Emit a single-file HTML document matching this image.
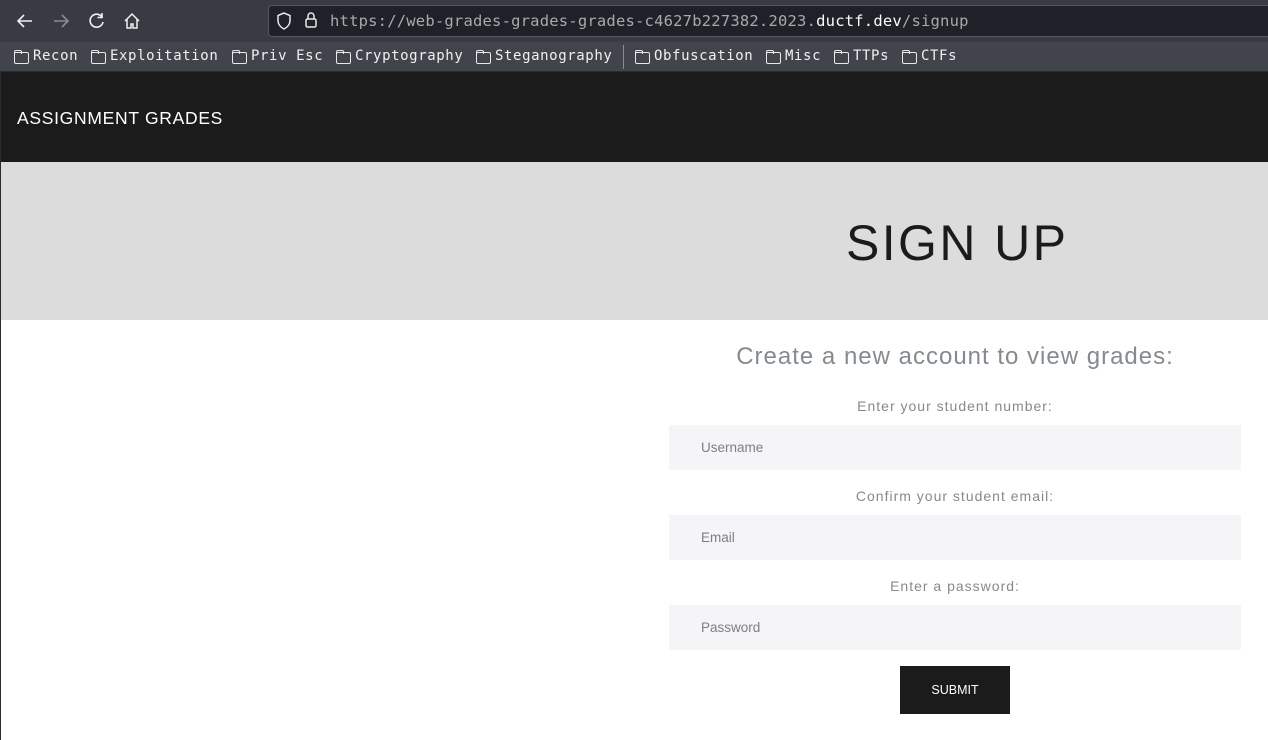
<!DOCTYPE html>
<html><head><style>
*{margin:0;padding:0;box-sizing:border-box}
body{width:1268px;height:740px;overflow:hidden;background:#fff;font-family:"Liberation Sans",sans-serif;position:relative}
.top{position:absolute;left:0;top:0;width:1268px;height:42px;background:#393b42}
.url{position:absolute;left:268px;top:5px;width:1010px;height:32px;background:#1f2128;border:1px solid #55575e;border-radius:4px;font-family:"DejaVu Sans Mono","Liberation Mono",monospace;font-size:15.5px;color:#a8a9ad;line-height:30px;padding-left:61px;letter-spacing:0.2px}
.url b{font-weight:normal;color:#fbfbfe}
.bm{position:absolute;left:0;top:42px;width:1268px;height:30px;background:#42444c;border-bottom:1px solid #2a2b30;font-family:"DejaVu Sans Mono","Liberation Mono",monospace;font-size:14px;color:#f0f0f4;letter-spacing:0.6px}
.bm span{position:absolute;top:6px;padding-left:19px}
.bm span:before{content:"";position:absolute;left:0;top:4px;width:13px;height:10px;border:1.3px solid #e8e8ec;border-radius:2px}
.bm span:after{content:"";position:absolute;left:0;top:2px;width:6px;height:3px;border:1.3px solid #e8e8ec;border-bottom:none;border-radius:2px 2px 0 0}
.nav{position:absolute;left:0;top:72px;width:1268px;height:90px;background:#1b1b1b}
.nav div{position:absolute;left:17px;top:36px;color:#fff;font-size:17.5px;letter-spacing:0.7px}
.hero{position:absolute;left:1px;top:162px;width:1267px;height:158px;background:#dcdcdc}
.hero h1{position:absolute;left:845px;top:52px;font-weight:normal;font-size:50px;letter-spacing:2.4px;color:#1b1b1b}
.edge{position:absolute;left:0;top:72px;width:1px;height:668px;background:#2a2a3a}
.c{position:absolute;left:669px;width:572px;text-align:center}
.lbl{font-size:14px;color:#858a90;letter-spacing:1px}
.in{position:absolute;left:669px;width:572px;height:45px;background:#f5f5f7;font-size:13.5px;color:#7b7f85;padding-left:32px;line-height:45px}
svg{position:absolute}
</style></head><body>
<div class="top">
<svg style="left:16px;top:13px" width="18" height="16" viewBox="0 0 18 16"><path d="M16 8H2M8 2L2 8l6 6" fill="none" stroke="#f0f0f4" stroke-width="1.6"/></svg>
<svg style="left:52px;top:13px" width="18" height="16" viewBox="0 0 18 16"><path d="M2 8h14M10 2l6 6-6 6" fill="none" stroke="#8a8b90" stroke-width="1.6"/></svg>
<svg style="left:88px;top:12px" width="18" height="18" viewBox="0 0 18 18"><path d="M14 5A6.5 6.5 0 1 0 15 10M14 1v4.5H9.5" fill="none" stroke="#f0f0f4" stroke-width="1.6"/></svg>
<svg style="left:123px;top:12px" width="18" height="18" viewBox="0 0 18 18"><path d="M2 9L9 2l7 7M4 7v9h4v-4h2v4h4V7" fill="none" stroke="#f0f0f4" stroke-width="1.5"/></svg>
</div>
<div class="url">https://web-grades-grades-grades-c4627b227382.2023.<b>ductf.dev</b>/signup</div>
<svg style="left:276px;top:12px" width="16" height="18" viewBox="0 0 16 18"><path d="M8 1L2 3.5v5C2 12.5 5 15.5 8 17c3-1.5 6-4.5 6-8.5v-5z" fill="none" stroke="#e8e8ec" stroke-width="1.5"/></svg>
<svg style="left:304px;top:11px" width="14" height="18" viewBox="0 0 14 18"><path d="M4 8V5a3 3 0 0 1 6 0v3" fill="none" stroke="#e8e8ec" stroke-width="1.5"/><rect x="2" y="8" width="10" height="8" rx="1.5" fill="none" stroke="#e8e8ec" stroke-width="1.5"/></svg>
<div class="bm">
<span style="left:14px">Recon</span><span style="left:91px">Exploitation</span><span style="left:232px">Priv Esc</span><span style="left:336px">Cryptography</span><span style="left:476px">Steganography</span>
<i style="position:absolute;left:623px;top:3px;width:1px;height:24px;background:#8a8b90"></i>
<span style="left:635px">Obfuscation</span><span style="left:766px">Misc</span><span style="left:834px">TTPs</span><span style="left:902px">CTFs</span>
</div>
<div class="nav"><div>ASSIGNMENT GRADES</div></div>
<div class="hero"><h1>SIGN UP</h1></div>
<div class="edge"></div>
<div class="c" style="top:343px;font-size:24px;color:#858a90;letter-spacing:1px">Create a new account to view grades:</div>
<div class="c lbl" style="top:398px">Enter your student number:</div>
<div class="in" style="top:425px">Username</div>
<div class="c lbl" style="top:488px">Confirm your student email:</div>
<div class="in" style="top:515px">Email</div>
<div class="c lbl" style="top:578px">Enter a password:</div>
<div class="in" style="top:605px">Password</div>
<div style="position:absolute;left:900px;top:666px;width:110px;height:48px;background:#1b1b1b;color:#fff;font-size:12.5px;text-align:center;line-height:48px">SUBMIT</div>
</body></html>
